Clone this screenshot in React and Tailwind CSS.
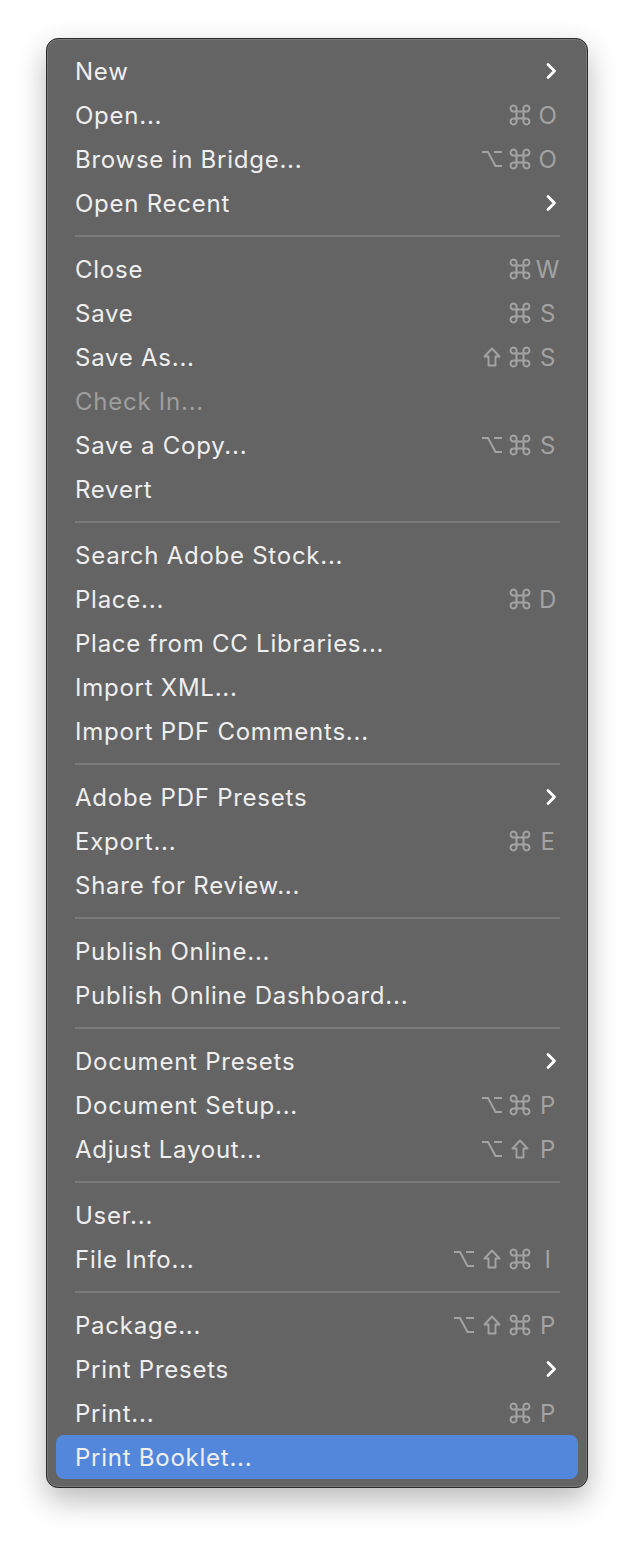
import React from 'react';

const menu = [
  [
    { label: 'New', sub: true },
    { label: 'Open...', keys: ['cmd', 'O'] },
    { label: 'Browse in Bridge...', keys: ['opt', 'cmd', 'O'] },
    { label: 'Open Recent', sub: true },
  ],
  [
    { label: 'Close', keys: ['cmd', 'W'] },
    { label: 'Save', keys: ['cmd', 'S'] },
    { label: 'Save As...', keys: ['shift', 'cmd', 'S'] },
    { label: 'Check In...', disabled: true },
    { label: 'Save a Copy...', keys: ['opt', 'cmd', 'S'] },
    { label: 'Revert' },
  ],
  [
    { label: 'Search Adobe Stock...' },
    { label: 'Place...', keys: ['cmd', 'D'] },
    { label: 'Place from CC Libraries...' },
    { label: 'Import XML...' },
    { label: 'Import PDF Comments...' },
  ],
  [
    { label: 'Adobe PDF Presets', sub: true },
    { label: 'Export...', keys: ['cmd', 'E'] },
    { label: 'Share for Review...' },
  ],
  [
    { label: 'Publish Online...' },
    { label: 'Publish Online Dashboard...' },
  ],
  [
    { label: 'Document Presets', sub: true },
    { label: 'Document Setup...', keys: ['opt', 'cmd', 'P'] },
    { label: 'Adjust Layout...', keys: ['opt', 'shift', 'P'] },
  ],
  [
    { label: 'User...' },
    { label: 'File Info...', keys: ['opt', 'shift', 'cmd', 'I'] },
  ],
  [
    { label: 'Package...', keys: ['opt', 'shift', 'cmd', 'P'] },
    { label: 'Print Presets', sub: true },
    { label: 'Print...', keys: ['cmd', 'P'] },
    { label: 'Print Booklet...', active: true },
  ],
];

const Chevron = () => (
  <svg width="14" height="18" viewBox="0 0 14 18" className="mr-[4px]">
    <path d="M4 2.5 L10.5 9 L4 15.5" fill="none" stroke="#ffffff" strokeWidth="2.8" strokeLinecap="round" strokeLinejoin="round" />
  </svg>
);

// keyboard modifier symbols
const CmdIcon = () => (
  <svg width="22" height="22" viewBox="0 0 22 22" fill="none" stroke="currentColor" strokeWidth="2">
    <path d="M7.5 7.5 H14.5 V14.5 H7.5 Z" />
    <path d="M7.5 7.5 V5 A3 3 0 1 0 5 7.5 Z" />
    <path d="M14.5 7.5 V5 A3 3 0 1 1 17 7.5 Z" />
    <path d="M7.5 14.5 V17 A3 3 0 1 1 5 14.5 Z" />
    <path d="M14.5 14.5 V17 A3 3 0 1 0 17 14.5 Z" />
  </svg>
);

const OptIcon = () => (
  <svg width="22" height="18" viewBox="0 0 22 18" fill="none" stroke="currentColor" strokeWidth="2">
    <path d="M1 2 H7 L14.5 16 H21" />
    <path d="M13 2 H21" />
  </svg>
);

const ShiftIcon = () => (
  <svg width="18" height="20" viewBox="0 0 18 20" fill="none" stroke="currentColor" strokeWidth="1.9" strokeLinejoin="round">
    <path d="M9 1.5 L16.5 9.5 H12.5 V18.5 H5.5 V9.5 H1.5 Z" />
  </svg>
);

const icons = { cmd: CmdIcon, opt: OptIcon, shift: ShiftIcon };

const Shortcut = ({ keys }) => (
  <div className="flex items-center text-[#a3a3a3]">
    {keys.map((k, i) => {
      const Icon = icons[k];
      return (
        <span key={i} className="w-[28px] flex justify-center items-center">
          {Icon ? <Icon /> : <span className="pt-[2px]">{k}</span>}
        </span>
      );
    })}
  </div>
);

const Row = ({ item }) => (
  <div
    className={`mx-[9px] h-[44px] flex items-center justify-between pl-[19px] pr-[16px] rounded-[8px] ${
      item.active ? 'bg-[#5287dc]' : ''
    }`}
  >
    <span className={`pt-[2px] ${item.disabled ? 'text-[#9e9e9e]' : 'text-[#efefef]'}`}>{item.label}</span>
    {item.sub && <Chevron />}
    {item.keys && <Shortcut keys={item.keys} />}
  </div>
);

export default function App() {
  return (
    <div className="min-h-[1542px] bg-white pt-[38px] pl-[46px]">
      <div
        className="w-[542px] rounded-[12px] border border-[#2a2a2a] bg-[#646464] pt-[10px] pb-[8px] shadow-[0_12px_30px_rgba(0,0,0,0.28),inset_0_0_0_1px_rgba(255,255,255,0.14)] text-[24px] tracking-[0.75px] leading-none"
        style={{ fontFamily: 'Inter, "Liberation Sans", sans-serif' }}
      >
        {menu.map((group, gi) => (
          <div key={gi}>
            {gi > 0 && (
              <div className="h-[22px] flex items-center">
                <div className="ml-[28px] mr-[27px] h-[2px] flex-1 bg-[#7a7a7a]" />
              </div>
            )}
            {group.map((item) => (
              <Row key={item.label} item={item} />
            ))}
          </div>
        ))}
      </div>
    </div>
  );
}
